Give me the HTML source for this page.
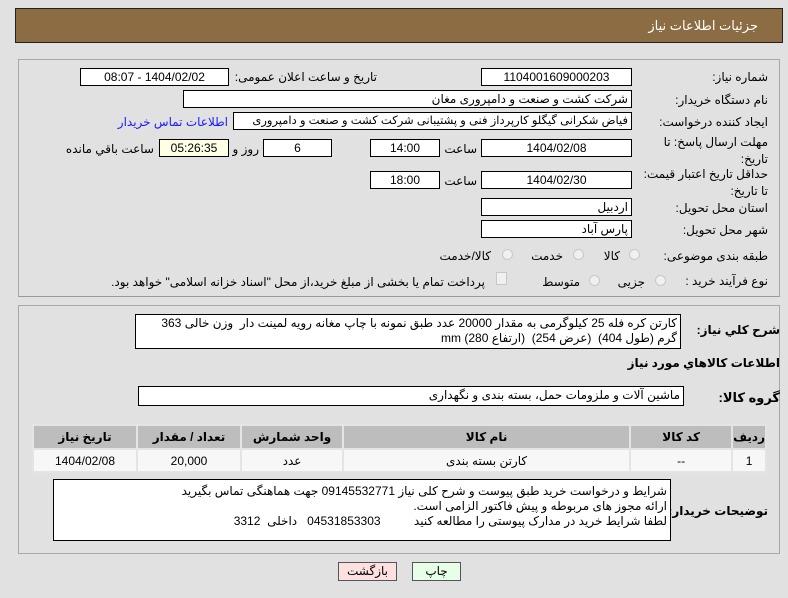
<!DOCTYPE html>
<html><head><meta charset="utf-8"><style>
body{margin:0;width:788px;height:598px;background:#e1e1e1;font-family:"Liberation Sans","DejaVu Sans",sans-serif;font-size:12px;color:#000;position:relative;overflow:hidden}
.a{position:absolute;white-space:nowrap}
.b{position:absolute;background:#fff;border:1px solid #000;box-sizing:border-box;direction:rtl;padding:0 3px;line-height:16px;white-space:nowrap;overflow:hidden}
.c{text-align:center}
.l{position:absolute;direction:rtl;white-space:nowrap;line-height:16px}
.r{position:absolute;width:11px;height:11px;border-radius:50%;border:1px solid #c8c8c8;background:#f0f0f0;box-sizing:border-box}
.bold{font-weight:bold}
table{position:absolute;border-collapse:collapse;direction:rtl}
td,th{border:2px solid #e4e4e4;text-align:center;font-size:12px;padding:0}
th{background:#bdbdbd;height:22px;font-weight:bold}
td{background:#f7f7f7;height:21px}
</style></head><body>
<div class="a" style="left:15px;top:8px;width:768px;height:35px;background:#8c6c43;border:1px solid #222;box-sizing:border-box"></div>
<div class="l" style="right:30px;top:18px;color:#fff;font-size:13px">جزئیات اطلاعات نیاز</div>

<div class="a" style="left:18px;top:59px;width:762px;height:238px;border:1px solid #a8a8a8;border-bottom-color:#999;box-sizing:border-box"></div>

<div class="l" style="right:20px;top:69px">شماره نیاز:</div>
<div class="b c" style="left:481px;top:68px;width:151px;height:18px">1104001609000203</div>
<div class="l" style="right:411px;top:69px">تاریخ و ساعت اعلان عمومی:</div>
<div class="b c" style="left:80px;top:68px;width:149px;height:18px">1404/02/02 - 08:07</div>

<div class="l" style="right:20px;top:92px">نام دستگاه خریدار:</div>
<div class="b" style="left:183px;top:90px;width:449px;height:18px">شرکت کشت و صنعت و دامپروری مغان</div>

<div class="l" style="right:20px;top:114px">ایجاد کننده درخواست:</div>
<div class="b" style="left:233px;top:112px;width:399px;height:18px;font-size:11.5px">فیاض شکرانی گیگلو کارپرداز فنی و پشتیبانی شرکت کشت و صنعت و دامپروری</div>
<div class="l" style="right:560px;top:114px;color:#1a1aff">اطلاعات تماس خریدار</div>

<div class="l" style="right:20px;top:134px;line-height:17px">مهلت ارسال پاسخ: تا<br>تاریخ:</div>
<div class="b c" style="left:481px;top:139px;width:151px;height:18px">1404/02/08</div>
<div class="l" style="right:311px;top:141px">ساعت</div>
<div class="b c" style="left:370px;top:139px;width:70px;height:18px">14:00</div>
<div class="b c" style="left:263px;top:139px;width:69px;height:18px">6</div>
<div class="l" style="right:529px;top:141px">روز و</div>
<div class="b c" style="left:159px;top:139px;width:70px;height:18px;background:#ffffe6">05:26:35</div>
<div class="l" style="right:634px;top:141px">ساعت باقي مانده</div>

<div class="l" style="right:20px;top:166px;line-height:17px">حداقل تاریخ اعتبار قیمت:<br>تا تاریخ:</div>
<div class="b c" style="left:481px;top:171px;width:151px;height:18px">1404/02/30</div>
<div class="l" style="right:311px;top:173px">ساعت</div>
<div class="b c" style="left:370px;top:171px;width:70px;height:18px">18:00</div>

<div class="l" style="right:20px;top:200px">استان محل تحویل:</div>
<div class="b" style="left:481px;top:198px;width:151px;height:18px">اردبیل</div>
<div class="l" style="right:20px;top:222px">شهر محل تحویل:</div>
<div class="b" style="left:481px;top:220px;width:151px;height:18px">پارس آباد</div>

<div class="l" style="right:20px;top:248px">طبقه بندی موضوعی:</div>
<div class="r" style="left:629px;top:249px"></div>
<div class="l" style="right:168px;top:248px">کالا</div>
<div class="r" style="left:573px;top:249px"></div>
<div class="l" style="right:225px;top:248px">خدمت</div>
<div class="r" style="left:502px;top:249px"></div>
<div class="l" style="right:297px;top:248px">کالا/خدمت</div>

<div class="l" style="right:20px;top:273px">نوع فرآیند خرید :</div>
<div class="r" style="left:655px;top:275px"></div>
<div class="l" style="right:143px;top:274px">جزیی</div>
<div class="r" style="left:589px;top:275px"></div>
<div class="l" style="right:208px;top:274px">متوسط</div>
<div class="a" style="left:496px;top:272px;width:9px;height:11px;border:1px solid #c8c8c8;background:#f0f0f0"></div>
<div class="l" style="right:303px;top:274px">پرداخت تمام یا بخشی از مبلغ خرید،از محل "اسناد خزانه اسلامی" خواهد بود.</div>

<div class="a" style="left:18px;top:305px;width:762px;height:249px;border:1px solid #a8a8a8;box-sizing:border-box"></div>

<div class="l bold" style="right:8px;top:322px">شرح کلي نیاز:</div>
<div class="b" style="left:135px;top:314px;width:546px;height:35px;white-space:normal;line-height:15px;padding-top:1px">کارتن کره فله 25 کیلوگرمی به مقدار 20000 عدد طبق نمونه با چاپ مغانه رویه لمینت دار &nbsp;وزن خالی 363 گرم (طول 404) &nbsp;(عرض 254) &nbsp;(ارتفاع 280) mm</div>
<div class="l bold" style="right:8px;top:355px">اطلاعات کالاهاي مورد نیاز</div>

<div class="l bold" style="right:8px;top:390px;font-size:13px">گروه کالا:</div>
<div class="b" style="left:138px;top:386px;width:546px;height:20px">ماشین آلات و ملزومات حمل، بسته بندی و نگهداری</div>

<table style="left:32px;top:424px;width:735px">
<tr><th style="width:29px">ردیف</th><th style="width:100px">کد کالا</th><th>نام کالا</th><th style="width:100px">واحد شمارش</th><th style="width:102px">تعداد / مقدار</th><th style="width:102px">تاریخ نیاز</th></tr>
<tr><td>1</td><td>--</td><td>کارتن بسته بندی</td><td>عدد</td><td>20,000</td><td>1404/02/08</td></tr>
</table>

<div class="l bold" style="right:20px;top:503px">توضیحات خریدار:</div>
<div class="b" style="left:53px;top:479px;width:618px;height:62px;white-space:pre;line-height:15px;padding-top:4px">شرایط و درخواست خرید طبق پیوست و شرح کلی نیاز 09145532771 جهت هماهنگی تماس بگیرید
ارائه مجوز های مربوطه و پیش فاکتور الزامی است.
لطفا شرایط خرید در مدارک پیوستی را مطالعه کنید          04531853303   داخلی  3312</div>

<div class="b c" style="left:338px;top:562px;width:59px;height:19px;background:#fde0e0;border-color:#555">بازگشت</div>
<div class="b c" style="left:412px;top:562px;width:49px;height:19px;background:#e6ffe6;border-color:#555">چاپ</div>
</body></html>
